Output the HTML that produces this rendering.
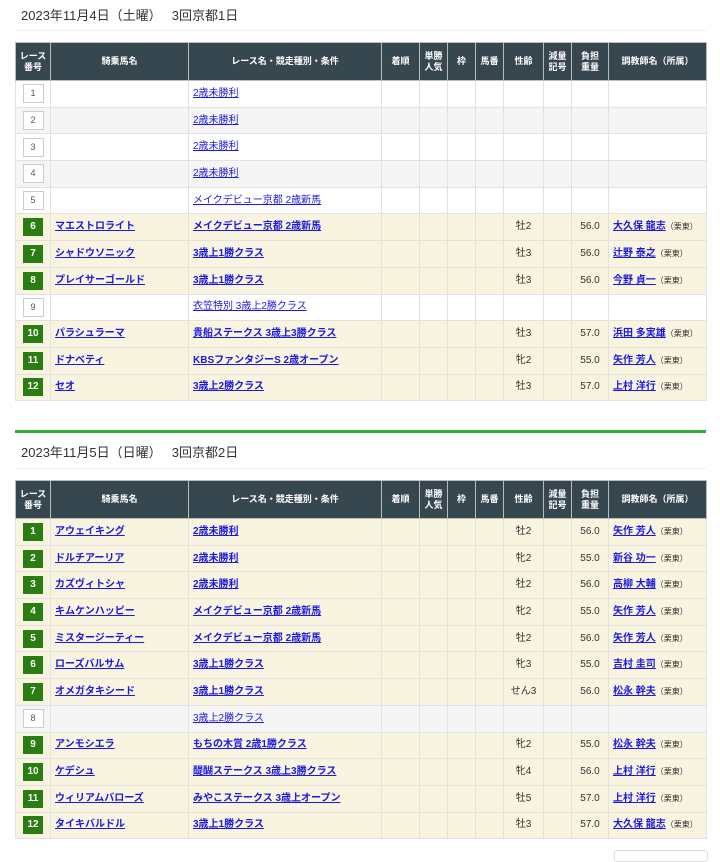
<!DOCTYPE html>
<html><head><meta charset="utf-8"><style>
body{margin:0;background:#fff;font-family:"Liberation Sans","Noto Sans CJK JP",sans-serif;color:#333;width:720px;height:852px;overflow:hidden;position:relative}
.date{position:absolute;left:21px;font-size:13px;color:#333}
.hr{position:absolute;left:15px;width:691px;height:1px;background:#eee}
table{position:absolute;left:15px;border-collapse:collapse;table-layout:fixed;width:691px;font-size:10px}
th{background:#37474f;color:#fff;font-weight:bold;font-size:9px;height:37px;border:1px solid #bbb;line-height:11px;padding:0;vertical-align:middle}
td{height:25.7px;border:1px solid #e2e2e2;padding:0 4px;white-space:nowrap;overflow:hidden;vertical-align:middle;line-height:12px}
tr.y td{background:#f8f4e0}
tr.g td{background:#f5f5f5}
tr.w td{background:#fff}
td.n{text-align:center;padding:0}
.b{display:inline-block;width:19px;height:17px;line-height:17px;border:1px solid #ccc;background:#fff;font-size:9px;color:#555;text-align:center;vertical-align:middle}
.gb{display:inline-block;width:20px;height:18px;line-height:18px;background:#2a7d12;color:#fff;font-size:10px;font-weight:bold;text-align:center;vertical-align:middle}
a{color:#1a1ae0;text-decoration:underline}
a.h{font-weight:bold}
td.c{text-align:center}
.s{font-size:8px;color:#333}
</style></head><body>
<div class="date" style="top:5px">2023年11月4日（土曜）　 3回京都1日</div>
<div class="hr" style="top:30px"></div>
<table style="top:42px">
<colgroup><col style="width:35px"><col style="width:138px"><col style="width:193px"><col style="width:38px"><col style="width:28px"><col style="width:28px"><col style="width:28px"><col style="width:40px"><col style="width:28px"><col style="width:37px"><col style="width:98px"></colgroup>
<tr><th>レース<br>番号</th><th>騎乗馬名</th><th>レース名・競走種別・条件</th><th>着順</th><th>単勝<br>人気</th><th>枠</th><th>馬番</th><th>性齢</th><th>減量<br>記号</th><th>負担<br>重量</th><th>調教師名（所属）</th></tr>
<tr class="w"><td class="n"><span class="b">1</span></td><td></td><td><a>2歳未勝利</a></td><td></td><td></td><td></td><td></td><td></td><td></td><td></td><td></td></tr>
<tr class="g"><td class="n"><span class="b">2</span></td><td></td><td><a>2歳未勝利</a></td><td></td><td></td><td></td><td></td><td></td><td></td><td></td><td></td></tr>
<tr class="w"><td class="n"><span class="b">3</span></td><td></td><td><a>2歳未勝利</a></td><td></td><td></td><td></td><td></td><td></td><td></td><td></td><td></td></tr>
<tr class="g"><td class="n"><span class="b">4</span></td><td></td><td><a>2歳未勝利</a></td><td></td><td></td><td></td><td></td><td></td><td></td><td></td><td></td></tr>
<tr class="w"><td class="n"><span class="b">5</span></td><td></td><td><a>メイクデビュー京都 2歳新馬</a></td><td></td><td></td><td></td><td></td><td></td><td></td><td></td><td></td></tr>
<tr class="y"><td class="n"><span class="gb">6</span></td><td><a class="h">マエストロライト</a></td><td><a class="h">メイクデビュー京都 2歳新馬</a></td><td></td><td></td><td></td><td></td><td class="c">牡2</td><td></td><td class="c">56.0</td><td><a class="h">大久保 龍志</a><span class="s">（栗東）</span></td></tr>
<tr class="y"><td class="n"><span class="gb">7</span></td><td><a class="h">シャドウソニック</a></td><td><a class="h">3歳上1勝クラス</a></td><td></td><td></td><td></td><td></td><td class="c">牡3</td><td></td><td class="c">56.0</td><td><a class="h">辻野 泰之</a><span class="s">（栗東）</span></td></tr>
<tr class="y"><td class="n"><span class="gb">8</span></td><td><a class="h">プレイサーゴールド</a></td><td><a class="h">3歳上1勝クラス</a></td><td></td><td></td><td></td><td></td><td class="c">牡3</td><td></td><td class="c">56.0</td><td><a class="h">今野 貞一</a><span class="s">（栗東）</span></td></tr>
<tr class="w"><td class="n"><span class="b">9</span></td><td></td><td><a>衣笠特別 3歳上2勝クラス</a></td><td></td><td></td><td></td><td></td><td></td><td></td><td></td><td></td></tr>
<tr class="y"><td class="n"><span class="gb">10</span></td><td><a class="h">パラシュラーマ</a></td><td><a class="h">貴船ステークス 3歳上3勝クラス</a></td><td></td><td></td><td></td><td></td><td class="c">牡3</td><td></td><td class="c">57.0</td><td><a class="h">浜田 多実雄</a><span class="s">（栗東）</span></td></tr>
<tr class="y"><td class="n"><span class="gb">11</span></td><td><a class="h">ドナベティ</a></td><td><a class="h">KBSファンタジーS 2歳オープン</a></td><td></td><td></td><td></td><td></td><td class="c">牝2</td><td></td><td class="c">55.0</td><td><a class="h">矢作 芳人</a><span class="s">（栗東）</span></td></tr>
<tr class="y"><td class="n"><span class="gb">12</span></td><td><a class="h">セオ</a></td><td><a class="h">3歳上2勝クラス</a></td><td></td><td></td><td></td><td></td><td class="c">牡3</td><td></td><td class="c">57.0</td><td><a class="h">上村 洋行</a><span class="s">（栗東）</span></td></tr>
</table>
<div style="position:absolute;left:15px;top:430px;width:691px;height:3px;background:#2eb135"></div>
<div class="date" style="top:442px">2023年11月5日（日曜）　 3回京都2日</div>
<div class="hr" style="top:468px"></div>
<table style="top:480px">
<colgroup><col style="width:35px"><col style="width:138px"><col style="width:193px"><col style="width:38px"><col style="width:28px"><col style="width:28px"><col style="width:28px"><col style="width:40px"><col style="width:28px"><col style="width:37px"><col style="width:98px"></colgroup>
<tr><th>レース<br>番号</th><th>騎乗馬名</th><th>レース名・競走種別・条件</th><th>着順</th><th>単勝<br>人気</th><th>枠</th><th>馬番</th><th>性齢</th><th>減量<br>記号</th><th>負担<br>重量</th><th>調教師名（所属）</th></tr>
<tr class="y"><td class="n"><span class="gb">1</span></td><td><a class="h">アウェイキング</a></td><td><a class="h">2歳未勝利</a></td><td></td><td></td><td></td><td></td><td class="c">牡2</td><td></td><td class="c">56.0</td><td><a class="h">矢作 芳人</a><span class="s">（栗東）</span></td></tr>
<tr class="y"><td class="n"><span class="gb">2</span></td><td><a class="h">ドルチアーリア</a></td><td><a class="h">2歳未勝利</a></td><td></td><td></td><td></td><td></td><td class="c">牝2</td><td></td><td class="c">55.0</td><td><a class="h">新谷 功一</a><span class="s">（栗東）</span></td></tr>
<tr class="y"><td class="n"><span class="gb">3</span></td><td><a class="h">カズヴィトシャ</a></td><td><a class="h">2歳未勝利</a></td><td></td><td></td><td></td><td></td><td class="c">牡2</td><td></td><td class="c">56.0</td><td><a class="h">高柳 大輔</a><span class="s">（栗東）</span></td></tr>
<tr class="y"><td class="n"><span class="gb">4</span></td><td><a class="h">キムケンハッピー</a></td><td><a class="h">メイクデビュー京都 2歳新馬</a></td><td></td><td></td><td></td><td></td><td class="c">牝2</td><td></td><td class="c">55.0</td><td><a class="h">矢作 芳人</a><span class="s">（栗東）</span></td></tr>
<tr class="y"><td class="n"><span class="gb">5</span></td><td><a class="h">ミスタージーティー</a></td><td><a class="h">メイクデビュー京都 2歳新馬</a></td><td></td><td></td><td></td><td></td><td class="c">牡2</td><td></td><td class="c">56.0</td><td><a class="h">矢作 芳人</a><span class="s">（栗東）</span></td></tr>
<tr class="y"><td class="n"><span class="gb">6</span></td><td><a class="h">ローズバルサム</a></td><td><a class="h">3歳上1勝クラス</a></td><td></td><td></td><td></td><td></td><td class="c">牝3</td><td></td><td class="c">55.0</td><td><a class="h">吉村 圭司</a><span class="s">（栗東）</span></td></tr>
<tr class="y"><td class="n"><span class="gb">7</span></td><td><a class="h">オメガタキシード</a></td><td><a class="h">3歳上1勝クラス</a></td><td></td><td></td><td></td><td></td><td class="c">せん3</td><td></td><td class="c">56.0</td><td><a class="h">松永 幹夫</a><span class="s">（栗東）</span></td></tr>
<tr class="g"><td class="n"><span class="b">8</span></td><td></td><td><a>3歳上2勝クラス</a></td><td></td><td></td><td></td><td></td><td></td><td></td><td></td><td></td></tr>
<tr class="y"><td class="n"><span class="gb">9</span></td><td><a class="h">アンモシエラ</a></td><td><a class="h">もちの木賞 2歳1勝クラス</a></td><td></td><td></td><td></td><td></td><td class="c">牝2</td><td></td><td class="c">55.0</td><td><a class="h">松永 幹夫</a><span class="s">（栗東）</span></td></tr>
<tr class="y"><td class="n"><span class="gb">10</span></td><td><a class="h">ケデシュ</a></td><td><a class="h">醍醐ステークス 3歳上3勝クラス</a></td><td></td><td></td><td></td><td></td><td class="c">牝4</td><td></td><td class="c">56.0</td><td><a class="h">上村 洋行</a><span class="s">（栗東）</span></td></tr>
<tr class="y"><td class="n"><span class="gb">11</span></td><td><a class="h">ウィリアムバローズ</a></td><td><a class="h">みやこステークス 3歳上オープン</a></td><td></td><td></td><td></td><td></td><td class="c">牡5</td><td></td><td class="c">57.0</td><td><a class="h">上村 洋行</a><span class="s">（栗東）</span></td></tr>
<tr class="y"><td class="n"><span class="gb">12</span></td><td><a class="h">タイキバルドル</a></td><td><a class="h">3歳上1勝クラス</a></td><td></td><td></td><td></td><td></td><td class="c">牡3</td><td></td><td class="c">57.0</td><td><a class="h">大久保 龍志</a><span class="s">（栗東）</span></td></tr>
</table>
<div style="position:absolute;left:614px;top:850px;width:92px;height:10px;border:1px solid #ddd;border-radius:3px"></div>
</body></html>
